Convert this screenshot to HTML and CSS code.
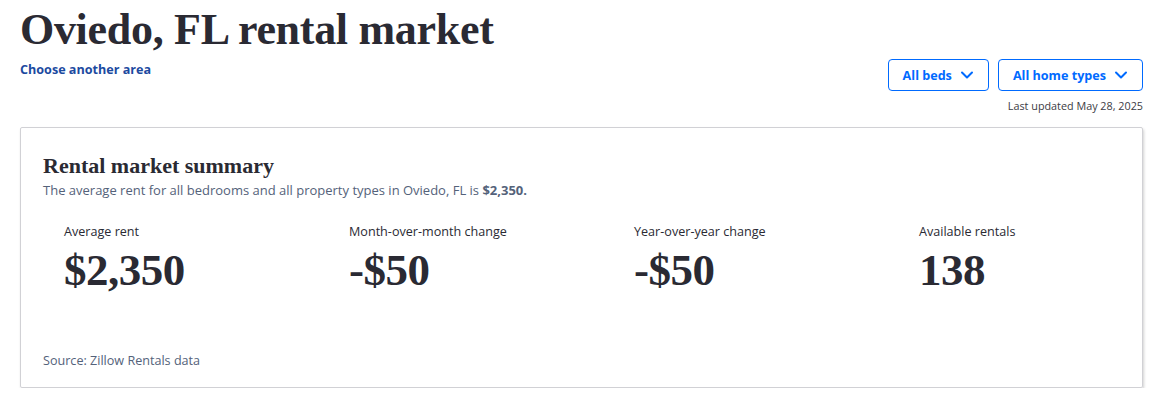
FILE: index.html
```html
<!DOCTYPE html>
<html>
<head>
<meta charset="utf-8">
<link rel="stylesheet" href="styles.css">
</head>
<body>
<div class="page">
  <header class="top">
    <div class="title-block">
      <h1 class="title">Oviedo, FL rental market</h1>
      <a class="area-link" href="#">Choose another area</a>
    </div>
    <div class="filters">
      <div class="buttons">
        <button class="filter-btn">All beds
          <svg width="14" height="14" viewBox="0 0 14 14"><path d="M2 4.5 L7 9.5 L12 4.5" fill="none" stroke="#006aff" stroke-width="2" stroke-linecap="round" stroke-linejoin="round"/></svg>
        </button>
        <button class="filter-btn">All home types
          <svg width="14" height="14" viewBox="0 0 14 14"><path d="M2 4.5 L7 9.5 L12 4.5" fill="none" stroke="#006aff" stroke-width="2" stroke-linecap="round" stroke-linejoin="round"/></svg>
        </button>
      </div>
      <div class="updated">Last updated May 28, 2025</div>
    </div>
  </header>
  <section class="card">
    <h2 class="card-title">Rental market summary</h2>
    <p class="card-sub">The average rent for all bedrooms and all property types in Oviedo, FL is <strong>$2,350.</strong></p>
    <div class="stats">
      <div class="stat"><div class="stat-label">Average rent</div><div class="stat-value">$2,350</div></div>
      <div class="stat"><div class="stat-label">Month-over-month change</div><div class="stat-value">-$50</div></div>
      <div class="stat"><div class="stat-label">Year-over-year change</div><div class="stat-value">-$50</div></div>
      <div class="stat"><div class="stat-label">Available rentals</div><div class="stat-value">138</div></div>
    </div>
    <div class="source">Source: Zillow Rentals data</div>
  </section>
</div>
</body>
</html>
```

FILE: styles.css
```css
* { box-sizing: border-box; }
body {
  margin: 0;
  background: #fff;
  font-family: "Open Sans", "Liberation Sans", sans-serif;
  color: #2a2a33;
}
.page {
  padding: 0 16px 0 20px;
  width: 1159px;
}
.top {
  display: flex;
  justify-content: space-between;
  align-items: flex-start;
  height: 127px;
}
.title {
  margin: 4px 0 0 0;
  font-family: "Liberation Serif", serif;
  font-weight: 700;
  font-size: 44px;
  line-height: 52px;
  color: #2a2a33;
  letter-spacing: -0.3px;
}
.area-link {
  display: block;
  margin-top: 6px;
  font-size: 12.6px;
  font-weight: 700;
  color: #1c4aa0;
  text-decoration: none;
  line-height: 16px;
}
.filters {
  margin-top: 59px;
  display: flex;
  flex-direction: column;
  align-items: flex-end;
}
.buttons {
  display: flex;
  gap: 9px;
}
.filter-btn {
  height: 32px;
  padding: 0 14px;
  border: 1px solid #006aff;
  border-radius: 4px;
  background: #fff;
  color: #006aff;
  font-family: "Open Sans", sans-serif;
  font-weight: 700;
  font-size: 12.6px;
  display: flex;
  align-items: center;
  gap: 8px;
}
.updated {
  margin-top: 8px;
  font-size: 10.8px;
  color: #3b3b44;
  line-height: 14px;
}
.card {
  width: 1123px;
  height: 261px;
  border: 1px solid #d1d1d5;
  border-radius: 2px;
  box-shadow: 1px 2px 3px rgba(0,0,0,0.18);
  padding: 22px 22px 0 22px;
  display: flex;
  flex-direction: column;
}
.card-title {
  margin: 0;
  font-family: "Liberation Serif", serif;
  font-weight: 700;
  font-size: 22px;
  line-height: 32px;
  color: #2a2a33;
}
.card-sub {
  margin: 0;
  font-size: 13px;
  line-height: 16px;
  color: #54627a;
}
.card-sub strong { font-weight: 700; }
.stats {
  display: grid;
  grid-template-columns: repeat(4, 285px);
  padding-left: 21px;
  margin-top: 26px;
}
.stat-label {
  font-size: 12.6px;
  line-height: 16px;
  color: #2a2a33;
}
.stat-value {
  margin-top: 6px;
  font-family: "Liberation Serif", serif;
  font-weight: 700;
  font-size: 45px;
  line-height: 48px;
  color: #2a2a33;
  letter-spacing: -0.5px;
}
.source {
  margin-top: auto;
  margin-bottom: 18px;
  font-size: 12.6px;
  line-height: 16px;
  color: #54627a;
}
```
